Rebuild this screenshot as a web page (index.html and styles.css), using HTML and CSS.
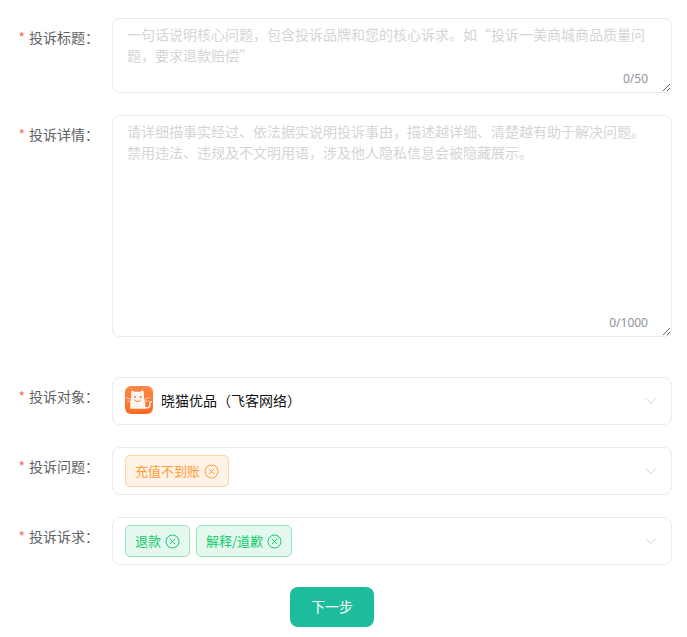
FILE: index.html
```html
<!DOCTYPE html>
<html lang="zh-CN">
<head>
<meta charset="utf-8">
<meta name="viewport" content="width=device-width, initial-scale=1">
<title>投诉</title>
<link rel="stylesheet" href="styles.css">
</head>
<body>
<svg width="0" height="0" class="sprite" aria-hidden="true">
  <symbol id="close" viewBox="0 0 15 15"><circle cx="7.5" cy="7.5" r="6.5"/><path d="M4.8 4.8l5.4 5.4M10.2 4.8l-5.4 5.4"/></symbol>
  <symbol id="arrow" viewBox="0 0 12 12"><path d="M1 3.5l5 5 5-5"/></symbol>
</svg>
<form class="form">
  <div class="row">
    <label class="label" for="title">投诉标题：</label>
    <div class="field">
      <textarea id="title" class="textarea" rows="3" maxlength="50" placeholder="一句话说明核心问题，包含投诉品牌和您的核心诉求。如“投诉一美商城商品质量问题，要求退款赔偿”"></textarea>
      <span class="count">0/50</span>
    </div>
  </div>
  <div class="row row-detail">
    <label class="label" for="detail">投诉详情：</label>
    <div class="field">
      <textarea id="detail" class="textarea" rows="10" maxlength="1000" placeholder="请详细描事实经过、依法据实说明投诉事由，描述越详细、清楚越有助于解决问题。禁用违法、违规及不文明用语，涉及他人隐私信息会被隐藏展示。"></textarea>
      <span class="count">0/1000</span>
    </div>
  </div>
  <div class="row">
    <label class="label" for="target">投诉对象：</label>
    <button type="button" id="target" class="field select">
      <svg class="logo" viewBox="0 0 28 28" aria-hidden="true">
        <defs><linearGradient id="orange" x2="0" y2="1"><stop stop-color="#ff8848"/><stop offset="1" stop-color="#fb6a22"/></linearGradient></defs>
        <rect width="28" height="28" rx="6" fill="url(#orange)"/>
        <path class="body" d="M6.2 5.4Q7.6 3.4 9 5.8H15.6Q17.4 3.2 18.8 5.6L19.2 14.5L20.4 16V22.8H5.2V16L6 14.5Z"/>
        <path class="tail" d="M20 21.8H22.4Q25 21.6 24.8 18.6Q24.4 15.6 26.4 15.8"/>
        <path class="whisker" d="M1.5 12L6 13.2M2.5 15.4L6 14.8M19 13.2L24.5 11.8M19.5 14.8L23.5 15"/>
        <circle class="eye" cx="10" cy="11" r="1"/><circle class="eye" cx="15.6" cy="11" r="1"/>
        <path class="smile" d="M9.8 14Q12.8 17.4 15.8 14"/>
      </svg>
      <span class="name">晓猫优品（飞客网络）</span>
      <svg class="arrow" aria-hidden="true"><use href="#arrow"/></svg>
    </button>
  </div>
  <div class="row">
    <label class="label" for="problem">投诉问题：</label>
    <div class="field select">
      <span class="tag orange"><span class="tag-text">充值不到账</span><button type="button" class="remove" aria-label="删除"><svg><use href="#close"/></svg></button></span>
      <button type="button" id="problem" class="toggle"><svg class="arrow" aria-hidden="true"><use href="#arrow"/></svg></button>
    </div>
  </div>
  <div class="row">
    <label class="label" for="appeal">投诉诉求：</label>
    <div class="field select">
      <span class="tag green"><span class="tag-text">退款</span><button type="button" class="remove" aria-label="删除"><svg><use href="#close"/></svg></button></span>
      <span class="tag green"><span class="tag-text">解释/道歉</span><button type="button" class="remove" aria-label="删除"><svg><use href="#close"/></svg></button></span>
      <button type="button" id="appeal" class="toggle"><svg class="arrow" aria-hidden="true"><use href="#arrow"/></svg></button>
    </div>
  </div>
  <button type="submit" class="next">下一步</button>
</form>
</body>
</html>
```
FILE: styles.css
```css
* {
  box-sizing: border-box;
}

body {
  margin: 0;
  background: #fff;
  color: #606266;
  font-family: "Noto Sans CJK SC", sans-serif;
  font-size: 14px;
}

button,
textarea {
  font: inherit;
}

button {
  padding: 0;
  border: 0;
  background: none;
  cursor: pointer;
}

.sprite {
  position: absolute;
}

.form {
  display: flex;
  flex-direction: column;
  gap: 22px;
  padding: 18px 15px 10px 0;
}

.row {
  display: flex;
  align-items: flex-start;
}

.row-detail {
  margin-bottom: 18px;
}

.label {
  flex: none;
  width: 112px;
  padding-right: 13px;
  line-height: 38px;
  text-align: right;
  white-space: nowrap;
}

.label::before {
  content: "*";
  margin-right: 4px;
  color: #f56c6c;
}

.field {
  position: relative;
  flex: 1;
  min-width: 0;
}

.textarea {
  display: block;
  width: 100%;
  padding: 5px 14px;
  border: 1px solid #ebebeb;
  border-radius: 8px;
  background: #fff;
  color: #606266;
  line-height: 21px;
  resize: vertical;
  outline: 0;
}

.textarea::placeholder {
  color: #d5d5d5;
}

.count {
  position: absolute;
  right: 24px;
  bottom: 5px;
  color: #909399;
  font-family: "Noto Sans", sans-serif;
  font-size: 12px;
  line-height: 18px;
}

.select {
  display: flex;
  align-items: center;
  gap: 6px;
  min-height: 48px;
  padding: 0 14px 0 12px;
  border: 1px solid #ebebeb;
  border-radius: 8px;
  text-align: left;
}

.arrow {
  display: block;
  width: 12px;
  height: 12px;
  margin-left: auto;
  fill: none;
  stroke: #d0d3d8;
}

.toggle {
  flex: 1;
  align-self: stretch;
}

.logo {
  width: 28px;
  height: 28px;
  margin-bottom: 2px;
}

.name {
  margin-left: 2px;
  padding-bottom: 3px;
  color: #111;
}

.body {
  fill: #fff5ef;
}

.tail,
.whisker,
.smile {
  fill: none;
  stroke: #fff0e5;
  stroke-linecap: round;
}

.tail {
  stroke-width: 1.5;
}

.whisker {
  stroke-width: 0.7;
}

.eye {
  fill: #f77938;
}

.smile {
  stroke: #f77938;
}

.tag {
  display: flex;
  align-items: center;
  gap: 4px;
  height: 32px;
  padding: 0 9px;
  border: 1px solid;
  border-radius: 5px;
  font-size: 13px;
  white-space: nowrap;
}

.tag-text {
  padding-bottom: 2px;
}

.orange {
  border-color: #ffd3a3;
  background: #fff2e6;
  color: #ff9c38;
}

.green {
  border-color: #99e6bd;
  background: #e5f8ef;
  color: #12cc68;
}

.remove {
  color: inherit;
}

.remove svg {
  display: block;
  width: 15px;
  height: 15px;
  fill: none;
  stroke: currentColor;
}

.next {
  align-self: center;
  height: 40px;
  margin-right: 8px;
  padding: 0 21px 2px;
  border-radius: 8px;
  background: #1dbc9c;
  color: #fff;
}
```
